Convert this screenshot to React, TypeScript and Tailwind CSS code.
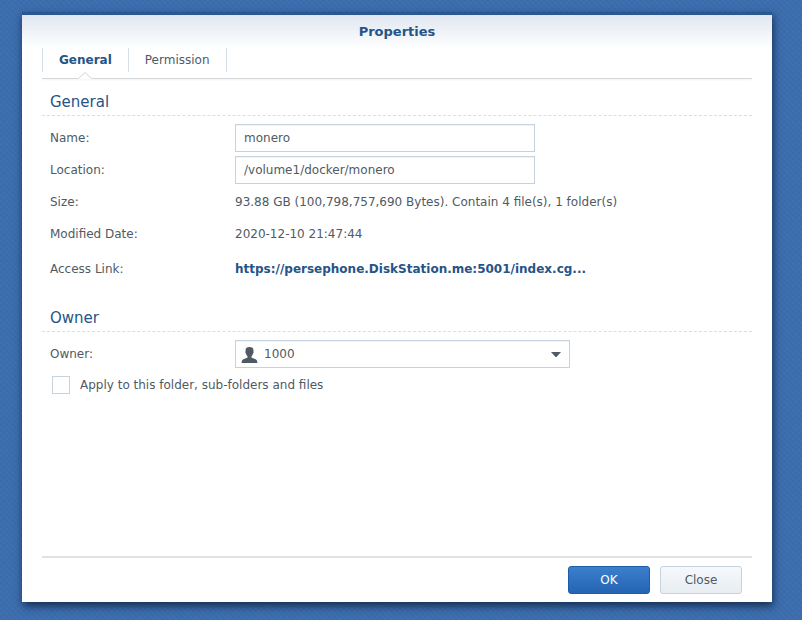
import type { ReactNode } from "react";

function SectionTitle({ children }: { children: ReactNode }) {
  return (
    <h2 className="h-7 border-b border-dashed border-[#d5dfe9] px-2 text-[15px] leading-7 text-[#265488]">
      {children}
    </h2>
  );
}

function Row({ label, htmlFor, children }: { label: string; htmlFor?: string; children: ReactNode }) {
  return (
    <div className="flex h-8 items-center px-2">
      {htmlFor ? (
        <label htmlFor={htmlFor} className="w-[185px] shrink-0">
          {label}
        </label>
      ) : (
        <span className="w-[185px] shrink-0">{label}</span>
      )}
      {children}
    </div>
  );
}

const field =
  "h-7 border border-[#c6d2de] bg-white text-[#505a64] shadow-[inset_0_1px_0_#f1f3f5] outline-none";

export default function App() {
  return (
    <div
      className="flex min-h-screen bg-[#3b6dae] bg-[repeating-linear-gradient(45deg,#ffffff05_0_2px,transparent_2px_4px),repeating-linear-gradient(135deg,#00000005_0_2px,transparent_2px_4px)] pt-3 pr-[30px] pb-[18px] pl-[22px] [font-family:Verdana,'DejaVu_Sans',sans-serif] text-[12px] leading-5 text-[#505a64]"
    >
      <main className="flex flex-1 flex-col border-t-3 border-[#2b5890] bg-white bg-[linear-gradient(#e0e7f1,#ffffff_34px)] px-5 pb-2 shadow-[1px_4px_8px_0_#0a1e3ccc]">
        <h1 className="h-[33px] text-center text-[13px] leading-[33px] font-bold text-[#265488]">Properties</h1>
        <div className="border-b border-[#d5d8da] pb-1.5 shadow-[0_2px_2px_-1px_#0000000d]">
          <nav className="flex h-6 border-l border-[#d5dfe9]">
            <button className="relative border-r border-[#d5dfe9] px-4 font-bold text-[#265488]">
              General
              <svg className="absolute top-6 left-1/2 -translate-x-1/2" width="14" height="7" viewBox="0 0 14 7">
                <path d="M0 7 L7 0.5 L14 7Z" fill="#fff" />
                <path d="M0.5 6.5 L7 0.5 L13.5 6.5" fill="none" stroke="#d0d3d6" />
              </svg>
            </button>
            <button className="border-r border-[#d5dfe9] px-4">Permission</button>
          </nav>
        </div>
        <form className="flex flex-1 flex-col" onSubmit={(e) => e.preventDefault()}>
          <section className="pt-[9px]">
            <SectionTitle>General</SectionTitle>
            <div className="pt-1.5">
              <Row label="Name:" htmlFor="name">
                <input id="name" defaultValue="monero" className={`${field} w-[300px] px-2`} />
              </Row>
              <Row label="Location:" htmlFor="location">
                <input id="location" readOnly defaultValue="/volume1/docker/monero" className={`${field} w-[300px] px-2`} />
              </Row>
              <Row label="Size:">93.88 GB (100,798,757,690 Bytes). Contain 4 file(s), 1 folder(s)</Row>
              <Row label="Modified Date:">2020-12-10 21:47:44</Row>
              <div className="pt-[3px]">
                <Row label="Access Link:">
                  <a href="#link" className="font-bold text-[#265488]">
                    https://persephone.DiskStation.me:5001/index.cg...
                  </a>
                </Row>
              </div>
            </div>
          </section>
          <section className="pt-[19px]">
            <SectionTitle>Owner</SectionTitle>
            <div className="pt-1.5">
              <Row label="Owner:" htmlFor="owner">
                <div className="relative">
                  <select id="owner" className={`${field} w-[335px] appearance-none pl-7`}>
                    <option>1000</option>
                  </select>
                  <svg className="pointer-events-none absolute top-1.5 left-1.5" width="17" height="17" viewBox="0 0 17 17" fill="#505a64">
                    <path d="M8.5 1C6 1 4.6 1.8 4.6 3.8V5.3C4.2 5.4 4.3 7.2 5 7.5C5.3 9 6 9.8 6.6 10.4V11.6L2.4 13.2C1.2 13.7 .8 14.5 .6 17H16.4C16.2 14.5 15.8 13.7 14.6 13.2L10.4 11.6V10.4C11 9.8 11.7 9 12 7.5C12.7 7.2 12.8 5.4 12.4 5.3V3.8C12.4 1.8 11 1 8.5 1Z" />
                  </svg>
                  <svg className="pointer-events-none absolute top-3 right-[9px]" width="10" height="5" viewBox="0 0 10 5">
                    <path d="M0 0H10L5.5 5H4.5Z" fill="#505a64" />
                  </svg>
                </div>
              </Row>
              <label className="flex h-[30px] items-center gap-2.5 pl-2.5">
                <input type="checkbox" className="size-[18px] appearance-none border border-[#c6d2de] bg-white checked:bg-[#265488]" />
                Apply to this folder, sub-folders and files
              </label>
            </div>
          </section>
          <footer className="mt-auto flex justify-end gap-2.5 border-t-2 border-t-[#dfe1e3] px-2.5 pt-2">
            <button type="submit" className="h-7 w-[82px] rounded-[3px] border border-[#1f5ba6] bg-linear-to-b from-[#3c7fcd] to-[#2465b3] text-white">
              OK
            </button>
            <button type="button" className="h-7 w-[82px] rounded-[3px] border border-[#c6d2de] bg-linear-to-b from-[#f5f9fd] to-[#e8edf1]">
              Close
            </button>
          </footer>
        </form>
      </main>
    </div>
  );
}
